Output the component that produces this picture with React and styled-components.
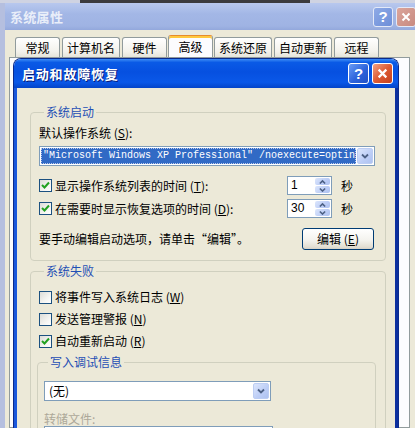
import React from 'react';
import styled, { createGlobalStyle } from 'styled-components';

const GlobalStyle = createGlobalStyle`
  html, body {
    margin: 0;
    padding: 0;
  }
  body {
    background: #c9cedf;
    font-family: "Noto Sans CJK SC", "Liberation Sans", sans-serif;
    font-size: 12px;
    color: #000;
  }
`;

const Screen = styled.div`
  position: relative;
  width: 415px;
  height: 428px;
  overflow: hidden;
  background: #c9cedf;
`;

const TopStrip = styled.div`
  height: 3px;
  background: linear-gradient(to right, #cfd3e2 0 80px, #3b3b3e 80px 310px, #cfd3e2 310px);
`;

const OuterWindow = styled.div`
  width: 420px;
  height: 425px;
  box-sizing: border-box;
  border-left: 5px solid #b5bfdf;
  display: flex;
  flex-direction: column;
`;

const OuterTitle = styled.div`
  height: 27px;
  display: flex;
  align-items: center;
  gap: 3px;
  padding: 0 4px 0 5px;
  background: linear-gradient(#b8c8ee, #a3b7e6 40%, #9fb3e3 85%, #93a8dc);
`;

const OuterTitleText = styled.div`
  flex: 1;
  color: #e9eef9;
  font-weight: bold;
  font-size: 13px;
  letter-spacing: 0.3px;
`;

const TitleButton = styled.div`
  width: ${p => p.$size}px;
  height: ${p => p.$size}px;
  box-sizing: border-box;
  border: 1px solid ${p => (p.$inactive ? '#e3e9f8' : '#ffffff')};
  border-radius: 3px;
  display: flex;
  align-items: center;
  justify-content: center;
  color: #fff;
  font-family: "Liberation Sans", sans-serif;
  font-weight: bold;
  font-size: 15px;
  background: ${p =>
    p.$close
      ? p.$inactive
        ? 'linear-gradient(135deg, #dba59b, #c88a80)'
        : 'linear-gradient(135deg, #f2a183, #dd5b34 50%, #c4411f)'
      : p.$inactive
        ? 'linear-gradient(135deg, #8eaae6, #6d8ed8)'
        : 'linear-gradient(135deg, #6a9cf6, #2d63db 55%, #2151c6)'};
`;

const OuterBody = styled.div`
  flex: 1;
  display: flex;
  flex-direction: column;
  background: #ece9d8;
  padding: 7px 10px 0 4px;
`;

const Tabs = styled.div`
  display: flex;
  align-items: flex-end;
  gap: 2px;
  height: 20px;
  margin-left: 6px;
`;

const Tab = styled.div`
  box-sizing: border-box;
  min-width: 45px;
  height: ${p => (p.$active ? 22 : 20)}px;
  padding: 0 4px;
  margin: ${p => (p.$active ? '0 -1px' : '0')};
  border: 1px solid #919b9c;
  border-bottom: none;
  border-top-color: ${p => (p.$active ? '#e68b2c' : '#919b9c')};
  border-radius: 3px 3px 0 0;
  background: ${p => (p.$active ? '#fcfcfe' : 'linear-gradient(#ffffff, #f3f2ec 70%, #e6e4da)')};
  box-shadow: ${p => (p.$active ? 'inset 0 2px #ffc83c' : 'none')};
  display: flex;
  align-items: center;
  justify-content: center;
  line-height: 14px;
  font-size: 12px;
  white-space: nowrap;
`;

const TabPanel = styled.div`
  flex: 1;
  background: #fcfcfe;
  border: 1px solid #919b9c;
`;

const Dialog = styled.div`
  position: absolute;
  left: 13px;
  top: 58px;
  width: 386px;
  height: 380px;
  box-sizing: border-box;
  display: flex;
  flex-direction: column;
  border: 1px solid #0a2a8c;
  border-bottom: none;
  border-radius: 8px 8px 0 0;
  overflow: hidden;
`;

const DialogTitle = styled.div`
  height: 29px;
  flex-shrink: 0;
  display: flex;
  align-items: center;
  gap: 3px;
  padding: 0 5px 0 8px;
  background: linear-gradient(#3d8cf5, #0a5ae6 12%, #0650e0 45%, #0a58e8 80%, #0444c8);
`;

const DialogTitleText = styled.div`
  flex: 1;
  color: #fff;
  font-weight: bold;
  font-size: 13px;
  letter-spacing: 0.8px;
  text-shadow: 1px 1px #0a1e78;
`;

const DialogBody = styled.div`
  flex: 1;
  background: #ece9d8;
  border-left: 3px solid #1a58dc;
  border-right: 3px solid #0c2f9e;
  padding-top: 17px;
`;

const Group = styled.fieldset`
  margin: ${p => p.$margin || '0 9px 0 13px'};
  padding: ${p => p.$padding || '7px 10px 10px 8px'};
  min-width: 0;
  border: 1px solid #d0d0bf;
  border-radius: 4px;
`;

const Legend = styled.legend`
  margin-left: ${p => p.$offset || 5}px;
  padding: 0 2px;
  line-height: 14px;
  color: #1f4fb5;
`;

const Label = styled.div`
  line-height: 14px;
  color: ${p => (p.$disabled ? '#aca899' : '#000')};
  margin-top: ${p => p.$top || 0}px;
`;

const Key = styled.span`
  text-decoration: underline;
`;

const Combo = styled.div`
  box-sizing: border-box;
  width: ${p => p.$width || '100%'};
  height: 20px;
  margin-top: ${p => p.$top || 0}px;
  border: 1px solid #7f9db9;
  background: #fff;
  padding: 1px;
  display: flex;
  gap: 1px;
`;

const Selected = styled.div`
  flex: 1;
  min-width: 0;
  box-sizing: border-box;
  background: #316ac5;
  color: #fff;
  outline: 1px dotted #b9c9ec;
  outline-offset: -1px;
  padding-left: 2px;
  font-family: "Liberation Mono", monospace;
  font-size: 10px;
  line-height: 16px;
  white-space: nowrap;
  overflow: hidden;
`;

const ComboText = styled.div`
  flex: 1;
  padding-left: 3px;
  line-height: 16px;
`;

const DropButton = styled.div`
  width: 16px;
  height: 16px;
  box-sizing: border-box;
  border: 1px solid #bccdf3;
  border-radius: 2px;
  background: linear-gradient(135deg, #dce6fc, #bccdf6 60%, #aec2f0);
  display: flex;
  align-items: center;
  justify-content: center;
`;

const Row = styled.div`
  display: flex;
  align-items: center;
  height: ${p => p.$height || 19}px;
  margin-top: ${p => p.$top || 0}px;
`;

const CheckLabel = styled.div`
  flex: 1;
  display: flex;
  align-items: center;
  gap: 3px;
  line-height: 14px;
`;

const Box = styled.span`
  width: 13px;
  height: 13px;
  box-sizing: border-box;
  border: 1px solid #1c5180;
  background: linear-gradient(135deg, #dcdcd7, #f4f4f1 60%, #ffffff);
  display: flex;
  align-items: center;
  justify-content: center;
`;

const Spin = styled.div`
  width: 45px;
  height: 19px;
  box-sizing: border-box;
  border: 1px solid #7f9db9;
  background: #fff;
  display: flex;
  padding: 1px;
`;

const SpinValue = styled.div`
  flex: 1;
  padding-left: 2px;
  font-family: "Liberation Sans", sans-serif;
  font-size: 12px;
  line-height: 15px;
`;

const SpinButtons = styled.div`
  width: 15px;
  display: flex;
  flex-direction: column;
  gap: 1px;
`;

const SpinHalf = styled.div`
  flex: 1;
  border-radius: 2px;
  background: linear-gradient(135deg, #dce6fc, #bccdf6 60%, #aec2f0);
  display: flex;
  align-items: center;
  justify-content: center;
`;

const Unit = styled.div`
  width: 43px;
  box-sizing: border-box;
  padding-left: 9px;
  line-height: 14px;
`;

const PushButton = styled.div`
  width: 72px;
  height: 22px;
  box-sizing: border-box;
  margin-right: 1px;
  border: 1px solid #003c74;
  border-radius: 3px;
  background: linear-gradient(#ffffff, #f4f3ee 55%, #e2ded2 90%, #d6d0c5);
  display: flex;
  align-items: center;
  justify-content: center;
  line-height: 14px;
`;

const HintRow = styled.div`
  display: flex;
  align-items: center;
  justify-content: space-between;
  margin-top: 10px;
`;

const TextBox = styled.div`
  width: 229px;
  height: 20px;
  box-sizing: border-box;
  margin-top: 0;
  border: 1px solid #7f9db9;
  background: #fff;
`;

function Chevron({ up, size = 8 }) {
  return (
    <svg width={size} height={size / 2 + 2} viewBox="0 0 8 6">
      <path
        d={up ? 'M1 5 L4 2 L7 5' : 'M1 1.5 L4 4.5 L7 1.5'}
        fill="none"
        stroke="#4d6185"
        strokeWidth="1.8"
      />
    </svg>
  );
}

function CloseGlyph({ size }) {
  return (
    <svg width={size} height={size} viewBox="0 0 10 10">
      <path d="M1.5 1.5 L8.5 8.5 M8.5 1.5 L1.5 8.5" stroke="#fff" strokeWidth="2" />
    </svg>
  );
}

function Checkbox({ checked, children }) {
  return (
    <CheckLabel>
      <Box>
        {checked && (
          <svg width="9" height="9" viewBox="0 0 9 9">
            <path d="M1 4 L3.5 6.5 L8 1.5" fill="none" stroke="#21a121" strokeWidth="2" />
          </svg>
        )}
      </Box>
      <span>{children}</span>
    </CheckLabel>
  );
}

function SpinBox({ value }) {
  return (
    <Spin>
      <SpinValue>{value}</SpinValue>
      <SpinButtons>
        <SpinHalf><Chevron up size={7} /></SpinHalf>
        <SpinHalf><Chevron size={7} /></SpinHalf>
      </SpinButtons>
    </Spin>
  );
}

const tabs = ['常规', '计算机名', '硬件', '高级', '系统还原', '自动更新', '远程'];

export default function App() {
  return (
    <Screen>
      <GlobalStyle />
      <TopStrip />
      <OuterWindow>
        <OuterTitle>
          <OuterTitleText>系统属性</OuterTitleText>
          <TitleButton $size={20} $inactive>?</TitleButton>
          <TitleButton $size={20} $inactive $close><CloseGlyph size={10} /></TitleButton>
        </OuterTitle>
        <OuterBody>
          <Tabs>
            {tabs.map(t => (
              <Tab key={t} $active={t === '高级'}>{t}</Tab>
            ))}
          </Tabs>
          <TabPanel />
        </OuterBody>
      </OuterWindow>

      <Dialog>
        <DialogTitle>
          <DialogTitleText>启动和故障恢复</DialogTitleText>
          <TitleButton $size={21}>?</TitleButton>
          <TitleButton $size={21} $close><CloseGlyph size={11} /></TitleButton>
        </DialogTitle>
        <DialogBody>
          <Group>
            <Legend>系统启动</Legend>
            <Label>默认操作系统 (<Key>S</Key>):</Label>
            <Combo $top={6}>
              <Selected>"Microsoft Windows XP Professional" /noexecute=optin</Selected>
              <DropButton><Chevron /></DropButton>
            </Combo>
            <Row $top={10}>
              <Checkbox checked>显示操作系统列表的时间 (<Key>T</Key>):</Checkbox>
              <SpinBox value="1" />
              <Unit>秒</Unit>
            </Row>
            <Row $top={4}>
              <Checkbox checked>在需要时显示恢复选项的时间 (<Key>D</Key>):</Checkbox>
              <SpinBox value="30" />
              <Unit>秒</Unit>
            </Row>
            <HintRow>
              <Label>要手动编辑启动选项，请单击“编辑”。</Label>
              <PushButton>编辑 (<Key>E</Key>)</PushButton>
            </HintRow>
          </Group>

          <Group $margin="3px 9px 0 13px" $padding="11px 10px 10px 8px">
            <Legend>系统失败</Legend>
            <Row $height={16}>
              <Checkbox>将事件写入系统日志 (<Key>W</Key>)</Checkbox>
            </Row>
            <Row $height={16} $top={6}>
              <Checkbox>发送管理警报 (<Key>N</Key>)</Checkbox>
            </Row>
            <Row $height={16} $top={6}>
              <Checkbox checked>自动重新启动 (<Key>R</Key>)</Checkbox>
            </Row>
            <Group $margin="6px -1px 0 -2px" $padding="12px 6px 10px 6px">
              <Legend $offset={4}>写入调试信息</Legend>
              <Combo $width="227px">
                <ComboText>(无)</ComboText>
                <DropButton><Chevron /></DropButton>
              </Combo>
              <Label $top={11} $disabled>转储文件:</Label>
              <TextBox />
            </Group>
          </Group>
        </DialogBody>
      </Dialog>
    </Screen>
  );
}
